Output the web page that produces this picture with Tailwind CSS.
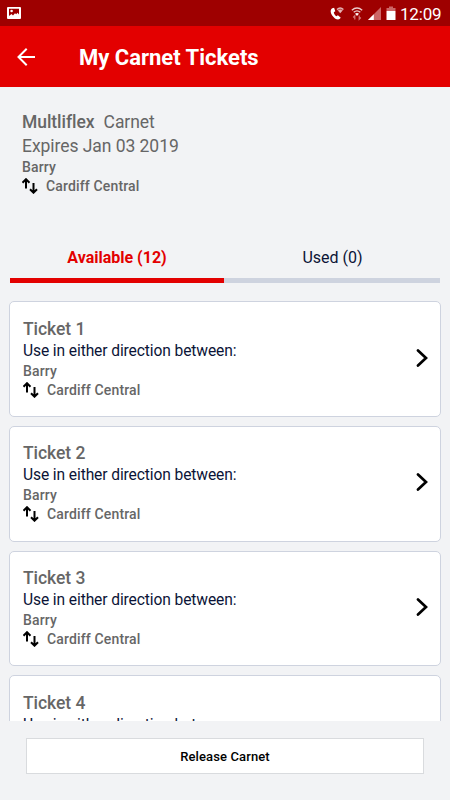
<!DOCTYPE html>
<html lang="en">
<head>
<meta charset="utf-8">
<title>My Carnet Tickets</title>
<script src="https://cdn.jsdelivr.net/npm/@tailwindcss/browser@4"></script>
</head>
<body class="w-[450px] h-[800px] overflow-hidden bg-[#f2f3f5] font-['Roboto','Liberation_Sans',sans-serif] text-[#666] flex flex-col">
<svg class="hidden">
  <symbol id="swap" viewBox="0 0 16 16"><path d="M4 10.500V1.500M.5 4.700 4 1.200l3.500 3.500M11.500 5v9.500M8 11.200l3.500 3.500 3.500-3.500" fill="none" stroke="#000" stroke-width="2"/></symbol>
  <symbol id="chev" viewBox="0 0 12 18"><path d="M2 1.500 10 9l-8 7.500" fill="none" stroke="#000" stroke-width="2.700" stroke-linecap="round"/></symbol>
</svg>
<div class="h-[26px] shrink-0 bg-[#9e0000] flex items-center justify-between pl-[7px] pr-[8px]">
  <svg class="w-[14px] h-[12px]" viewBox="0 0 14 12"><rect width="14" height="12" rx="1" fill="#fff"/><path d="M2 1.700h10v5.800l-1.500-1.700-1.300 1.400-1.200-1-2 2.300-1.500-1.500L2 9z" fill="#9e0000"/><circle cx="4.600" cy="4" r="1.300" fill="#fff"/></svg>
  <div class="flex items-center text-white">
    <svg class="w-[69px] h-[16px] mr-[1px]" viewBox="0 0 69 16">
      <path d="M2.300 3.300C.2 4.400.2 7.500 2.200 10.400s5 4.800 7.300 3.700l1.300-1.400-2.900-2.500-1.500 1C4.900 10.300 4 8.800 3.800 7.200l1.500-.9-1.200-3.500z" fill="#fff"/>
      <path d="M6.500 3.900q3.700-3.300 7.400 0L10.200 8.300z" fill="#e5b3b3"/><path d="M7.800 5q2.400-1.600 4.800 0" stroke="#9e0000" stroke-width=".6" fill="none"/>
      <path d="M21.800 5.300q5.200-4.500 10.400 0M23.700 7.300q3.300-2.900 6.600 0" fill="none" stroke="#fff" stroke-opacity=".8" stroke-width="1.300"/><path d="M25 8.700q2-1.600 4 0L27 11z" fill="#fff"/>
      <path d="M24.800 14.500V10.800l-1.600 1.700M29.200 10.500v3.700l1.600-1.700" fill="none" stroke="#d47878" stroke-width="1.200"/>
      <path d="M38 15 51 2v13z" fill="#c66"/><path d="M38 15l5.800-5.800V15z" fill="#fff"/>
      <path d="M59 1.500h4v1.500h2.500v3h-9V3H59z" fill="#c66"/><path d="M56.500 6h9v9h-9z" fill="#fff"/>
    </svg>
    <div class="text-[17px] leading-[26px] tracking-[-0.200px] w-[42px] pt-px whitespace-nowrap">12:09</div>
  </div>
</div>
<header class="h-[61px] shrink-0 bg-[#e30000] flex items-center pl-[17px] pt-[2px]">
  <svg class="w-[19px] h-[18px] -mt-[2px]" viewBox="0 0 19 18"><path d="M18 9H1.800M9.700 .8 1.500 9l8.200 8.200" fill="none" stroke="#fff" stroke-width="2"/></svg>
  <h1 class="ml-[43px] text-[22px] font-bold text-white whitespace-nowrap">My Carnet Tickets</h1>
</header>
<section class="h-[150px] shrink-0 pl-[22px] pt-[24px]">
  <div class="text-[17.500px] tracking-[-0.050px] leading-[23.500px]"><span class="font-medium">Multliflex</span><span class="ml-[9px]">Carnet</span></div>
  <div class="text-[17.500px] tracking-[-0.050px] leading-[23.500px]">Expires Jan 03 2019</div>
  <div class="text-[14px] tracking-[0.150px] leading-[19px] font-medium">Barry</div>
  <div class="flex items-center text-[14px] tracking-[0.150px] leading-[19px] font-medium"><svg class="size-4 mr-[8px] -mt-px"><use href="#swap"/></svg>Cardiff Central</div>
</section>
<nav class="h-[46px] shrink-0 mx-[10px] flex text-[16px] text-center">
  <div class="w-[214px] h-[46px] border-b-[5px] border-[#e30000] text-[#e30000] font-bold leading-[41px]">Available (12)</div>
  <div class="w-[216px] h-[46px] border-b-[5px] border-[#ced3df] text-[#0b1437] leading-[41px] pl-px">Used (0)</div>
</nav>
<main class="h-[438px] shrink-0 overflow-hidden px-[9px] pt-[18.400px]" id="list"></main>
<footer class="pt-[17px] px-[26px]">
  <button class="w-full h-[36px] pt-[2px] bg-white border border-[#d9dbde] text-[13px] tracking-[0.120px] font-medium text-black">Release Carnet</button>
</footer>
<script>
document.getElementById('list').innerHTML = [1, 2, 3, 4].map(n => `
<article class="h-[115.700px] mb-[9px] bg-white border border-[#ced3df] rounded-[5px] pl-[13px] pr-[12px] pt-[14.300px] flex justify-between">
  <div>
    <h2 class="text-[17.500px] tracking-[-0.050px] leading-[24px] font-medium">Ticket ${n}</h2>
    <p class="text-[15.600px] tracking-[-0.110px] leading-[21px] text-[#0b1437]">Use in either direction between:</p>
    <div class="text-[14px] tracking-[0.150px] leading-[19px] font-medium">Barry</div>
    <div class="flex items-center text-[14px] tracking-[0.150px] leading-[19px] font-medium"><svg class="size-4 mr-[8px] -mt-px"><use href="#swap"/></svg>Cardiff Central</div>
  </div>
  <svg class="w-[12px] h-[18px] mt-[32px]"><use href="#chev"/></svg>
</article>`).join('');
</script>
</body>
</html>
